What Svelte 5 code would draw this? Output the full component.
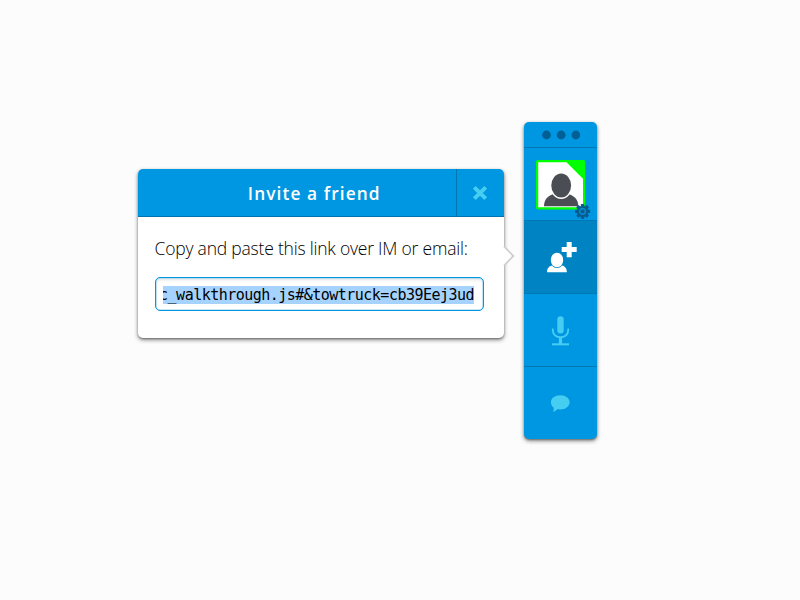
<script>
  const message = 'Copy and paste this link over IM or email:';
  const link = 'c_walkthrough.js#&towtruck=cb39Eej3ud';
  const teeth = [0, 45, 90, 135, 180, 225, 270, 315];
</script>

<main>
  <section class="panel">
    <header>
      <h1>Invite a friend</h1>
      <button class="close" aria-label="Close">
        <svg width="16" height="16" viewBox="0 0 16 16"><path d="M2.3 2.3 13.7 13.7M13.7 2.3 2.3 13.7" stroke="#46cdf2" stroke-width="4" /></svg>
      </button>
    </header>
    <div class="body">
      <p>{message}</p>
      <div class="field"><div class="clip"><span>{link}</span></div></div>
    </div>
    <svg class="arrow" width="13" height="24" viewBox="0 0 13 24">
      <path d="M0 2 10 12 0 22Z" fill="#fff" />
      <path d="M1 2.3 10.4 12 1 21.7" fill="none" stroke="#cfcfcf" stroke-width="1.8" />
    </svg>
  </section>

  <nav class="dock">
    <svg class="grip" width="73" height="25" viewBox="0 0 73 25" fill="#005f94">
      <circle cx="22.5" cy="13" r="4.4" />
      <circle cx="37.2" cy="13" r="4.4" />
      <circle cx="51.8" cy="13" r="4.4" />
    </svg>
    <button class="cell profile" aria-label="Profile">
      <svg width="73" height="72" viewBox="0 0 73 72">
        <rect x="12" y="12" width="49.2" height="49.6" rx="2" fill="#0f0" />
        <path d="M14.2 14.2H42.5L59 30.8V59.2H14.2Z" fill="#fff" />
        <path d="M20 58.3c0-7 4-10.7 10.3-12.5h13.4C50 47.6 54.3 51.3 54.3 58.3Z" fill="#4b4d55" />
        <ellipse cx="37.2" cy="37.5" rx="11.3" ry="13.5" fill="#fff" />
        <ellipse cx="37.2" cy="37.5" rx="9.9" ry="12.1" fill="#4b4d55" />
        <g transform="translate(58.6 63.4)">
          {#each teeth as angle}
            <rect x="-1.7" y="-7.5" width="3.4" height="4" rx=".5" fill="#075c91" transform="rotate({angle})" />
          {/each}
          <circle r="4.5" fill="none" stroke="#075c91" stroke-width="2.4" />
          <circle r="3.4" fill="#0788cb" />
          <circle r="2" fill="#075c91" />
        </g>
      </svg>
    </button>
    <button class="cell active" aria-label="Invite">
      <svg width="73" height="72" viewBox="0 0 73 72">
        <path d="M23 51.3c0-4 2.3-6.4 6.2-7.2 1.8 2.5 6.2 2.5 8 0 3.8.8 5.7 3.2 5.7 7.2Z" fill="#fff" />
        <ellipse cx="33" cy="39" rx="7" ry="8" fill="#0083c3" />
        <ellipse cx="33" cy="39" rx="6.2" ry="7.3" fill="#fff" />
        <path d="M42.7 21h5v5h5v5h-5v5.3h-5V31h-5v-5h5Z" fill="#fff" />
      </svg>
    </button>
    <button class="cell" aria-label="Microphone">
      <svg width="73" height="72" viewBox="0 0 73 72">
        <rect x="33.3" y="22.2" width="6.4" height="17.3" rx="3.2" fill="#46cdf2" />
        <path d="M28.8 34.5v1.8c0 9.2 15.4 9.2 15.4 0v-1.8" fill="none" stroke="#46cdf2" stroke-width="1.8" />
        <path d="M36.5 43v7" stroke="#46cdf2" stroke-width="3.2" />
        <path d="M28 50.3h17" stroke="#46cdf2" stroke-width="2" />
      </svg>
    </button>
    <button class="cell" aria-label="Chat">
      <svg width="73" height="72" viewBox="0 0 73 72">
        <path d="M36.3 28.2c5.4 0 9.3 3 9.3 7s-3.9 7.2-9.3 7.2c-1 0-1.8-.1-2.7-.3-1.2 1.4-2.8 2.5-4.8 3 .8-1.2 1-2.7.9-4.4-1.7-1.3-2.8-3.3-2.8-5.5 0-4 4-7 9.4-7Z" fill="#46cdf2" />
      </svg>
    </button>
  </nav>
</main>

<style>
  :global(body) { background: #fcfcfc; }
  main {
    box-sizing: border-box;
    width: 800px;
    height: 600px;
    padding: 122px 0 0 137.5px;
    display: flex;
    align-items: flex-start;
    gap: 20.5px;
    background: #fcfcfc;
    font-family: "Open Sans", sans-serif;
    overflow: hidden;
  }
  button {
    appearance: none;
    background: none;
    border: 0;
    padding: 0;
    margin: 0;
    display: flex;
  }
  .panel {
    position: relative;
    width: 366px;
    height: 169px;
    margin: 47px 0 0;
    border-radius: 5px;
    background: #fff;
    box-shadow: 0 2px 4px rgba(0, 0, 0, .45), 0 1px 2px rgba(0, 0, 0, .3);
  }
  header {
    box-sizing: border-box;
    display: flex;
    height: 48px;
    border-bottom: 1px solid #0073ae;
    border-radius: 5px 5px 0 0;
    background: #0097e2;
  }
  h1 {
    flex: 1;
    margin: 0;
    padding-left: 35px;
    text-align: center;
    color: #fff;
    font-size: 17.3px;
    line-height: 50px;
    font-weight: 600;
    letter-spacing: 1.1px;
  }
  .close {
    box-sizing: border-box;
    width: 47.5px;
    border-left: 1px solid #0076b2;
    align-items: center;
    justify-content: center;
  }
  .body { padding: 17px 20px 0 17px; }
  p {
    margin: 0;
    height: 43px;
    color: #000;
    font-size: 17.5px;
    line-height: 28px;
    font-weight: 300;
    letter-spacing: -.21px;
    white-space: nowrap;
  }
  .field {
    box-sizing: border-box;
    height: 34px;
    padding: 8px 8.5px 0 7.5px;
    border: 1px solid #0097e2;
    border-radius: 5px;
    background: #fff;
    box-shadow: inset 0 0 0 .5px #8ccff2, inset 0 2px 3px #e2e2e2;
  }
  .clip {
    display: flex;
    justify-content: flex-end;
    height: 18px;
    overflow: hidden;
    background: #a5d3fe;
    color: #000;
    font: 15px/18px "DejaVu Sans Mono", monospace;
    letter-spacing: -.52px;
    white-space: pre;
  }
  .arrow { position: absolute; left: 365px; top: 75px; }
  .dock {
    width: 73px;
    height: 317px;
    border-radius: 5px;
    background: #0097e2;
    box-shadow: 0 2px 4px rgba(0, 0, 0, .45), 0 1px 2px rgba(0, 0, 0, .3);
  }
  .grip { display: block; }
  .cell {
    box-sizing: border-box;
    width: 73px;
    height: 73px;
    border-top: 1px solid #0076b2;
  }
  .active { background: #0083c3; }
</style>
